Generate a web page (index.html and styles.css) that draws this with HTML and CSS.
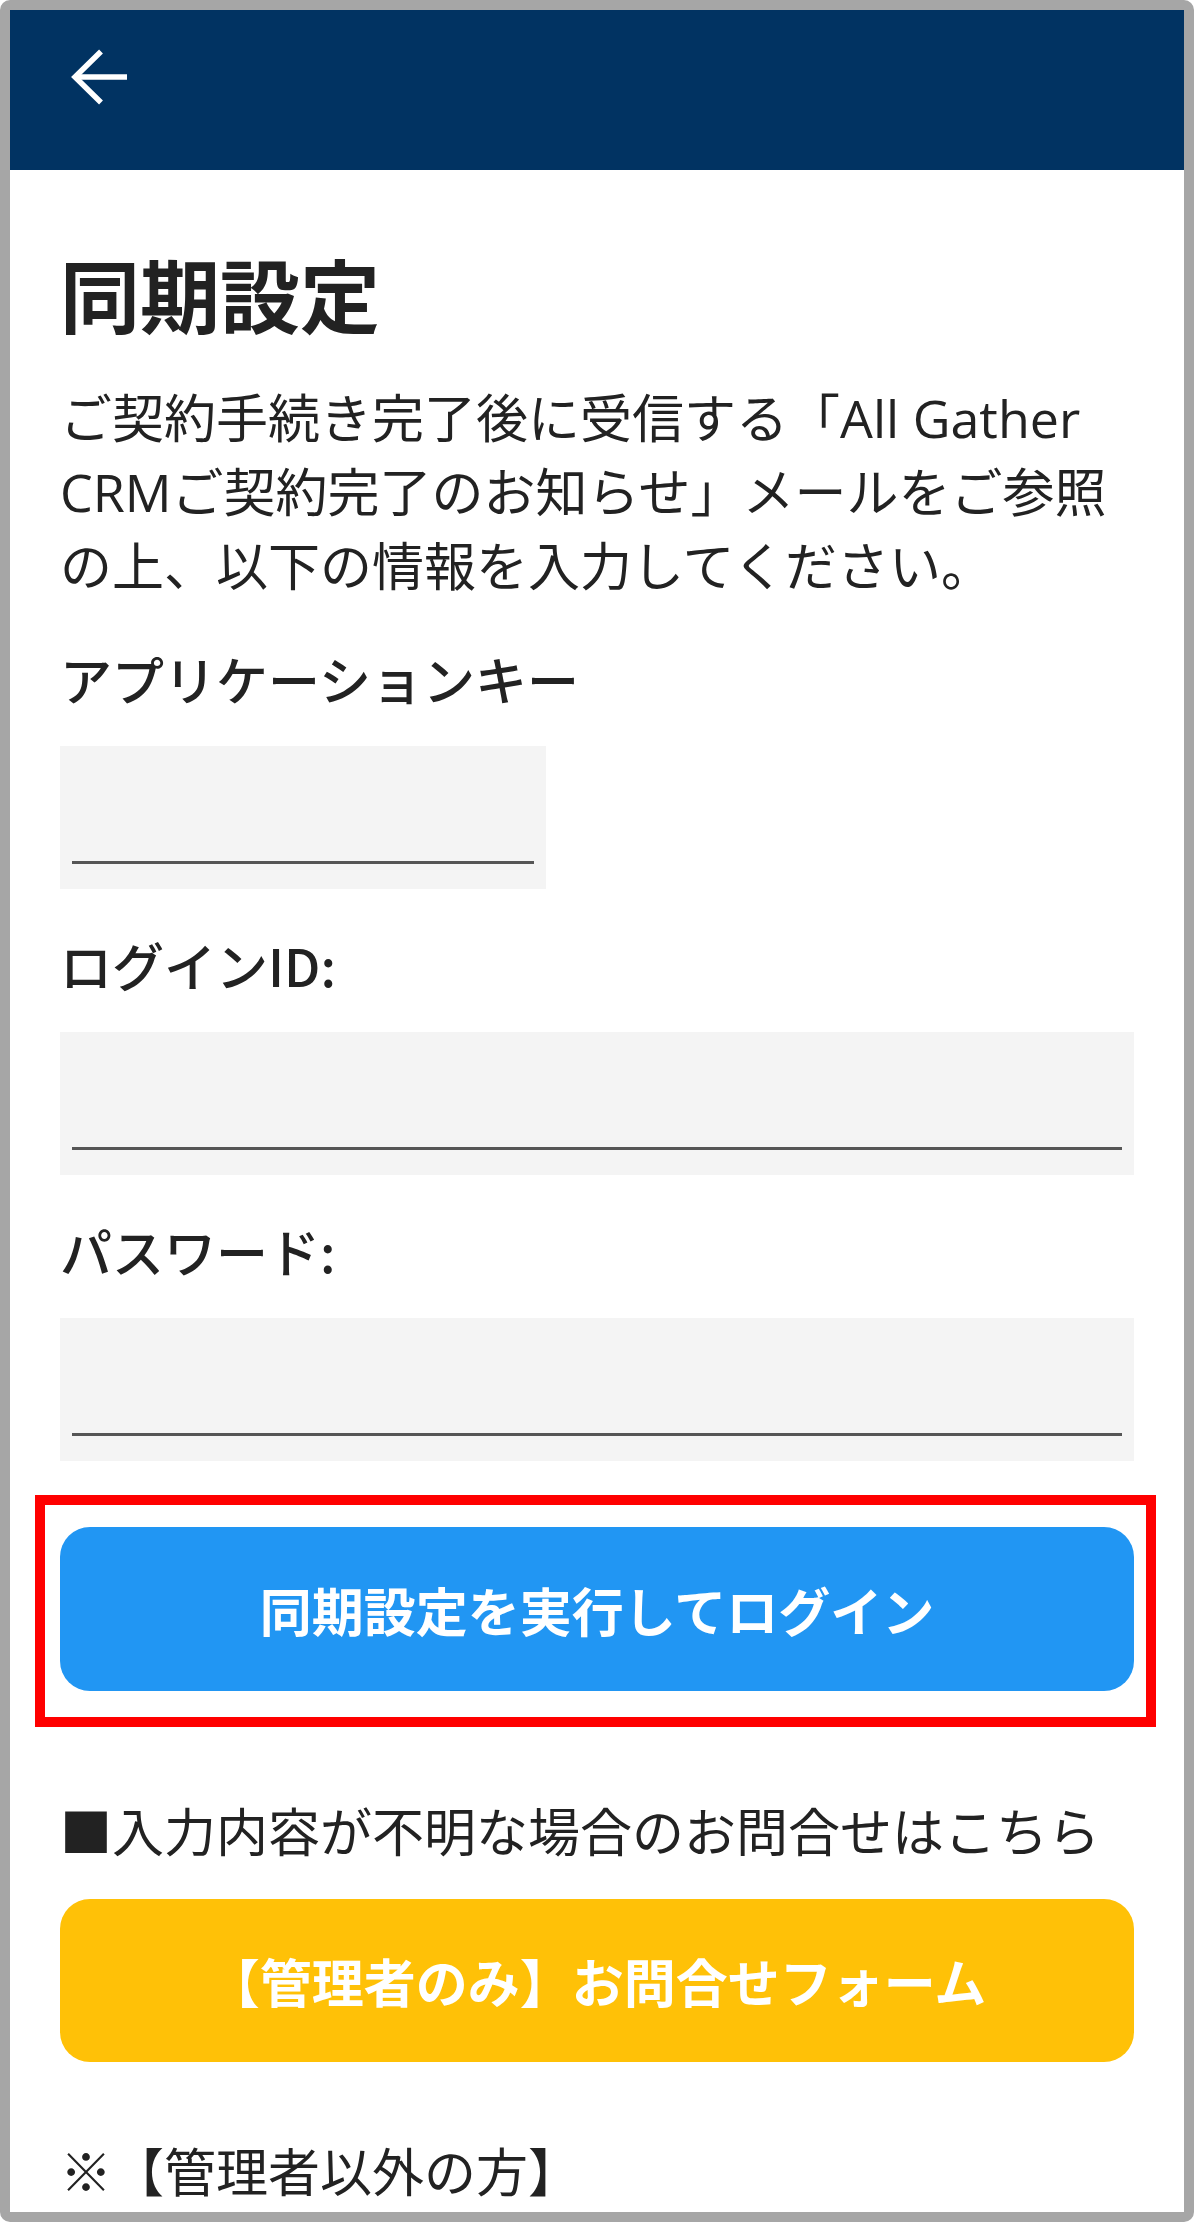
FILE: index.html
```html
<!DOCTYPE html>
<html lang="ja">
<head>
    <meta charset="UTF-8">
    <title>同期設定</title>
    <link rel="stylesheet" href="styles.css">
</head>
<body>

<div class="frame">
    <header class="toolbar">
        <button class="back-btn" aria-label="戻る">
            <svg width="60" height="60" viewBox="0 0 60 60">
                <polyline points="31,4.5 5,30 31,55.5" fill="none" stroke="#fff" stroke-width="5.5"/>
                <line x1="6" y1="30" x2="57" y2="30" stroke="#fff" stroke-width="5.5"/>
            </svg>
        </button>
    </header>

    <main class="content">
        <h1 class="title">同期設定</h1>
        <p class="lead">ご契約手続き完了後に受信する「All Gather CRMご契約完了のお知らせ」メールをご参照の上、以下の情報を入力してください。</p>

        <div class="form-group">
            <label class="label">アプリケーションキー</label>
            <div class="field field-short"><input type="text" class="input"></div>
        </div>

        <div class="form-group">
            <label class="label">ログインID:</label>
            <div class="field"><input type="text" class="input"></div>
        </div>

        <div class="form-group">
            <label class="label">パスワード:</label>
            <div class="field"><input type="password" class="input"></div>
        </div>

        <div class="highlight">
            <button class="btn btn-blue">同期設定を実行してログイン</button>
        </div>

        <p class="note">■入力内容が不明な場合のお問合せはこちら</p>
        <button class="btn btn-yellow">【管理者のみ】お問合せフォーム</button>

        <p class="note note-last">※【管理者以外の方】</p>
    </main>
</div>

</body>
</html>
```

FILE: styles.css
```css
body {
    margin: 0;
    font-family: "Open Sans", "Noto Sans CJK JP", sans-serif;
    color: #222;
}

.frame {
    height: 2222px;
    box-sizing: border-box;
    border: 10px solid #a6a6a6;
    border-radius: 10px;
    overflow: hidden;
    background: #fff;
}

.toolbar {
    height: 160px;
    box-sizing: border-box;
    background: #013362;
    padding: 37px 0 0 60px;
}

.back-btn {
    display: block;
    padding: 0;
    border: 0;
    background: none;
    cursor: pointer;
}

.back-btn svg {
    display: block;
}

.content {
    padding: 0 50px;
}

.title {
    margin: 78px 0 0;
    font-size: 80px;
    line-height: 96px;
    font-weight: 700;
}

.lead {
    margin: 37px 0 0;
    font-size: 52px;
    line-height: 74px;
}

.form-group {
    margin-top: 39px;
}

.label {
    display: block;
    font-family: "Noto Sans CJK JP", sans-serif;
    font-size: 52px;
    line-height: 74px;
    font-weight: 500;
}

.field {
    height: 143px;
    margin-top: 30px;
    box-sizing: border-box;
    background: #f4f4f4;
    padding: 0 12px 25px;
    display: flex;
    align-items: flex-end;
}

.field-short {
    width: 486px;
}

.input {
    flex: 1;
    min-width: 0;
    height: 60px;
    border: 0;
    border-bottom: 3px solid #555;
    background: transparent;
    padding: 0;
    font-size: 48px;
    outline: none;
}

.highlight {
    margin: 34px -22px 0 -25px;
    padding: 22px 12px 26px 15px;
    border: 10px solid #ff0000;
}

.btn {
    display: block;
    width: 100%;
    border: 0;
    border-radius: 30px;
    color: #fff;
    font-family: "Open Sans", "Noto Sans CJK JP", sans-serif;
    font-size: 52px;
    font-weight: 700;
    cursor: pointer;
}

.btn-blue {
    height: 164px;
    background: #2196f3;
}

.btn-yellow {
    height: 163px;
    margin-top: 30px;
    background: #ffc107;
}

.note {
    margin: 68px 0 0;
    font-size: 52px;
    line-height: 74px;
}

.note-last {
    margin-top: 73px;
}
```
